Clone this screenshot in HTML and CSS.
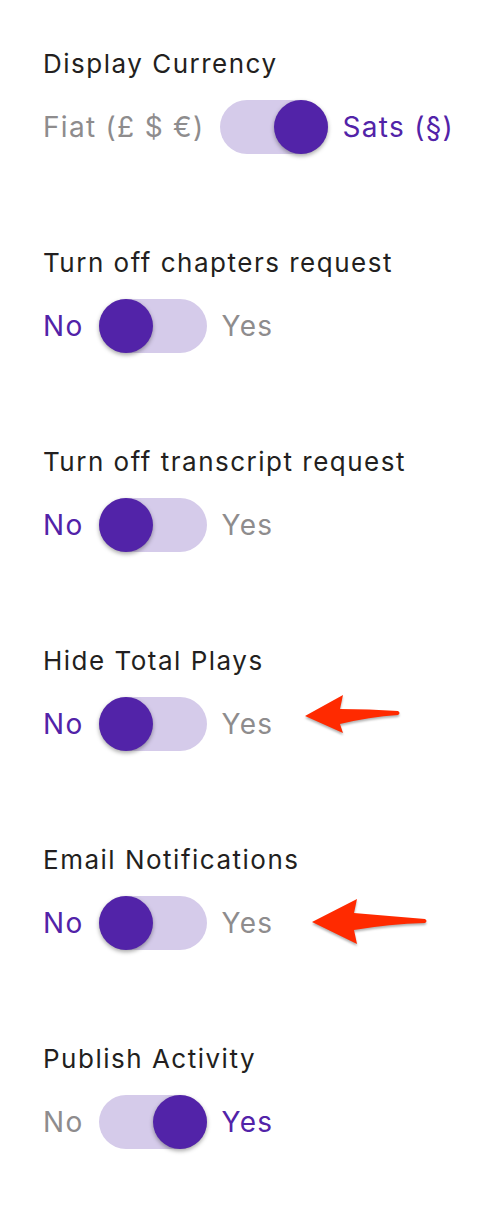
FILE: index.html
```html
<!DOCTYPE html>
<html lang="en">
<head>
    <meta charset="UTF-8">
    <meta name="viewport" content="width=device-width, initial-scale=1.0">
    <title>Settings</title>
    <link rel="stylesheet" href="styles.css">
</head>
<body>
    <div class="settings">
        <div class="setting">
            <div class="setting-title">Display Currency</div>
            <div class="toggle-row">
                <span class="option">Fiat (£ $ €)</span>
                <div class="switch on"><div class="knob"></div></div>
                <span class="option active">Sats (§)</span>
            </div>
        </div>

        <div class="setting">
            <div class="setting-title">Turn off chapters request</div>
            <div class="toggle-row">
                <span class="option active">No</span>
                <div class="switch"><div class="knob"></div></div>
                <span class="option">Yes</span>
            </div>
        </div>

        <div class="setting">
            <div class="setting-title">Turn off transcript request</div>
            <div class="toggle-row">
                <span class="option active">No</span>
                <div class="switch"><div class="knob"></div></div>
                <span class="option">Yes</span>
            </div>
        </div>

        <div class="setting">
            <div class="setting-title">Hide Total Plays</div>
            <div class="toggle-row">
                <span class="option active">No</span>
                <div class="switch"><div class="knob"></div></div>
                <span class="option">Yes</span>
                <svg class="arrow arrow-small" width="100" height="45" viewBox="0 0 100 45">
                    <path d="M2 24 L40 3 L37 17 Q66 17 95 19 Q98 21 95 23 Q66 25 37 32 L40 41 Z" fill="#ff2a00"/>
                </svg>
            </div>
        </div>

        <div class="setting">
            <div class="setting-title">Email Notifications</div>
            <div class="toggle-row">
                <span class="option active">No</span>
                <div class="switch"><div class="knob"></div></div>
                <span class="option">Yes</span>
                <svg class="arrow arrow-big" width="122" height="52" viewBox="0 0 122 52">
                    <path d="M3 26 L48 3 L45 17 Q80 20 116 23 Q119 25 116 27 Q80 28 45 34 L48 48 Z" fill="#ff2a00"/>
                </svg>
            </div>
        </div>

        <div class="setting">
            <div class="setting-title">Publish Activity</div>
            <div class="toggle-row">
                <span class="option">No</span>
                <div class="switch on"><div class="knob"></div></div>
                <span class="option active">Yes</span>
            </div>
        </div>
    </div>
</body>
</html>
```

FILE: styles.css
```css
body {
    margin: 0;
    background: #ffffff;
    font-family: Inter, "Open Sans", sans-serif;
}

.settings {
    padding: 48px 43px 0;
}

.setting {
    height: 199px;
}

.setting-title {
    font-size: 26px;
    line-height: 32px;
    color: #231f20;
    letter-spacing: 1.5px;
}

.toggle-row {
    display: flex;
    align-items: center;
    gap: 15px;
    margin-top: 20px;
}

.option {
    font-size: 28px;
    color: #8e8c8d;
    letter-spacing: 1.3px;
}

.option.active {
    color: #5223a8;
}

.switch {
    width: 108px;
    height: 54px;
    border-radius: 27px;
    background: #d5cbea;
    display: flex;
}

.switch.on {
    justify-content: flex-end;
}

.knob {
    width: 54px;
    height: 54px;
    border-radius: 50%;
    background: #5223a8;
    box-shadow: 0 2px 4px rgba(0, 0, 0, 0.35);
}

.arrow {
    filter: drop-shadow(0 2px 1px rgba(0, 0, 0, 0.3));
}

.arrow-small {
    margin-left: 15px;
    margin-top: -20px;
}

.arrow-big {
    margin-left: 21px;
    margin-bottom: 2px;
}
```
